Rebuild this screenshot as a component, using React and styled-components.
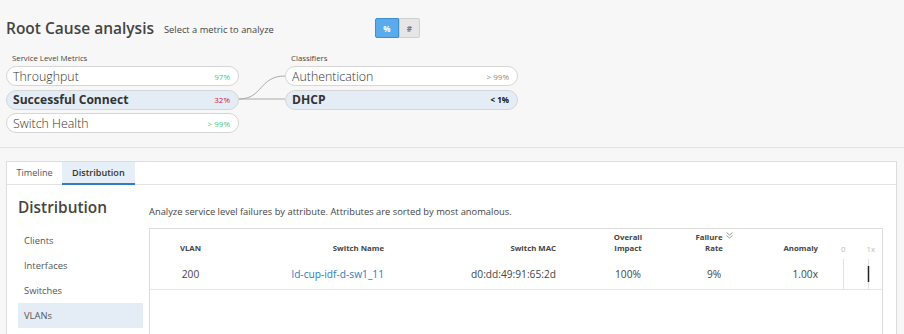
import React from 'react';
import styled, { createGlobalStyle } from 'styled-components';

const Global = createGlobalStyle`
  html, body { margin: 0; padding: 0; background: #f7f7f7; }
  body { font-family: "Open Sans", "Liberation Sans", sans-serif; color: #444; }
  * { box-sizing: border-box; }
`;

const Page = styled.div`
  width: 904px;
  height: 334px;
  overflow: hidden;
  background: #f7f7f7;
`;

const Header = styled.header`
  padding: 17px 6px 14px;
  border-bottom: 1px solid #e2e2e2;
`;

const TitleRow = styled.div`
  display: flex;
  align-items: center;
  height: 22px;
`;

const Title = styled.h1`
  margin: 0;
  font-size: 15.5px;
  line-height: 22px;
  font-weight: 600;
  color: #444;
`;

const Subtitle = styled.span`
  margin-left: 10px;
  margin-top: 3px;
  font-size: 9.3px;
  color: #444;
`;

const Toggle = styled.div`
  display: flex;
  margin-left: 101px;
`;

const ToggleButton = styled.div`
  width: ${p => p.$w}px;
  height: 20px;
  display: flex;
  align-items: center;
  justify-content: center;
  font-size: 8px;
  font-weight: 700;
  color: ${p => (p.$active ? '#fff' : '#777')};
  background: ${p => (p.$active ? '#5aabeb' : '#e6e6e6')};
  border: 1px solid ${p => (p.$active ? '#3d8fd2' : '#cfcfcf')};
  border-radius: ${p => (p.$active ? '2px 0 0 2px' : '0 2px 2px 0')};
`;

const Metrics = styled.div`
  display: flex;
  align-items: flex-start;
  margin-top: 13px;
`;

const Column = styled.div`
  width: 233px;
`;

const GroupLabel = styled.div`
  font-size: 7.8px;
  line-height: 12px;
  padding-left: 6px;
  margin-bottom: 2px;
  color: #444;
`;

const PillList = styled.div`
  display: flex;
  flex-direction: column;
  gap: 3.5px;
`;

const Pill = styled.div`
  height: 20px;
  display: flex;
  align-items: center;
  justify-content: space-between;
  padding: 0 8px 0 6px;
  border: 1px solid #d6d6d6;
  border-radius: 10px;
  background: ${p => (p.$selected ? '#e4edf6' : '#fff')};
`;

const PillName = styled.span`
  font-size: ${p => (p.$selected ? 12.1 : 12.4)}px;
  font-weight: ${p => (p.$selected ? 700 : 300)};
  color: #333;
`;

const PillValue = styled.span`
  font-size: 8px;
  font-weight: ${p => (p.$bold ? 700 : 400)};
  color: ${p => p.$color};
`;

const Connector = styled.svg`
  flex: 0 0 46px;
  margin-top: 14px;
`;

const Lower = styled.section`
  padding: 13px 7px 0 6px;
`;

const Panel = styled.div`
  background: #fff;
  border: 1px solid #dcdcdc;
  border-bottom: none;
  height: 200px;
`;

const TabBar = styled.div`
  display: flex;
  height: 23px;
  border-bottom: 1px solid #e3e3e3;
`;

const Tab = styled.div`
  display: flex;
  align-items: center;
  padding: 0 ${p => p.$pad}px;
  font-size: 9.1px;
  font-weight: ${p => (p.$active ? 600 : 400)};
  color: ${p => (p.$active ? '#333' : '#555')};
  background: ${p => (p.$active ? '#e6eef7' : 'transparent')};
  border-bottom: 2px solid ${p => (p.$active ? '#2f7dc4' : 'transparent')};
  margin-bottom: -1px;
`;

const Body = styled.div`
  display: grid;
  grid-template-columns: 125px 1fr;
  column-gap: 6px;
  padding: 0 14px 0 11px;
`;

const SideHeading = styled.h2`
  margin: 0;
  height: 43px;
  padding-top: 11px;
  font-size: 15.4px;
  line-height: 24px;
  font-weight: 600;
  color: #444;
`;

const Nav = styled.nav`
  display: flex;
  flex-direction: column;
`;

const NavItem = styled.div`
  height: 25px;
  display: flex;
  align-items: center;
  padding-left: 6px;
  font-size: 9.4px;
  color: #555;
  background: ${p => (p.$active ? '#e4edf6' : 'transparent')};
`;

const Description = styled.div`
  height: 43px;
  padding-top: 19px;
  font-size: 9.35px;
  line-height: 15px;
  color: #444;
`;

const Table = styled.div`
  border: 1px solid #dcdcdc;
  border-bottom: none;
  height: 120px;
`;

const Row = styled.div`
  display: grid;
  grid-template-columns: 81px 161px 180px 112px 60px 82px 1fr;
  height: ${p => (p.$head ? 30 : 31)}px;
  border-bottom: ${p => (p.$head ? 'none' : '1px solid #e6e6e6')};
`;

const HeadCell = styled.div`
  align-self: end;
  padding: 0 ${p => p.$pr || 0}px 5px 0;
  font-size: 7.8px;
  line-height: 11px;
  font-weight: 700;
  color: #444;
  text-align: ${p => p.$align || 'center'};
`;

const Cell = styled.div`
  display: flex;
  align-items: center;
  justify-content: ${p => (p.$align === 'right' ? 'flex-end' : 'center')};
  padding-right: ${p => p.$pr || 0}px;
  font-size: 10.2px;
  color: #444;
`;

const Link = styled.a`
  color: #2a7bc1;
  text-decoration: none;
`;

const Scale = styled.div`
  align-self: end;
  display: flex;
  gap: 21px;
  padding: 0 0 4px 15px;
  font-size: 7.8px;
  line-height: 11px;
  color: #bbb;
`;

const SortIcon = () => (
  <svg width="7" height="7" viewBox="0 0 7 7" style={{ marginLeft: 3, verticalAlign: 1 }}>
    <polyline points="0.5,0.5 3.5,3 6.5,0.5" fill="none" stroke="#888" strokeWidth="0.9" />
    <polyline points="0.5,3.5 3.5,6 6.5,3.5" fill="none" stroke="#888" strokeWidth="0.9" />
  </svg>
);

const leftPills = [
  { name: 'Throughput', value: '97%', color: '#4cc97a' },
  { name: 'Successful Connect', value: '32%', color: '#cc2244', selected: true },
  { name: 'Switch Health', value: '> 99%', color: '#4cc97a' },
];

const rightPills = [
  { name: 'Authentication', value: '> 99%', color: '#888' },
  { name: 'DHCP', value: '< 1%', color: '#111', selected: true, bold: true },
];

export default function App() {
  return (
    <Page>
      <Global />
      <Header>
        <TitleRow>
          <Title>Root Cause analysis</Title>
          <Subtitle>Select a metric to analyze</Subtitle>
          <Toggle>
            <ToggleButton $active $w={24}>%</ToggleButton>
            <ToggleButton $w={21}>#</ToggleButton>
          </Toggle>
        </TitleRow>
        <Metrics>
          <Column>
            <GroupLabel>Service Level Metrics</GroupLabel>
            <PillList>
              {leftPills.map(p => (
                <Pill key={p.name} $selected={p.selected}>
                  <PillName $selected={p.selected}>{p.name}</PillName>
                  <PillValue $color={p.color}>{p.value}</PillValue>
                </Pill>
              ))}
            </PillList>
          </Column>
          <Connector width="46" height="66" viewBox="0 0 46 66">
            <path d="M0 33 C 24 33, 20 10, 46 10" fill="none" stroke="#aaa" strokeWidth="1" />
            <path d="M0 33 L 46 33" fill="none" stroke="#aaa" strokeWidth="1" />
          </Connector>
          <Column>
            <GroupLabel>Classifiers</GroupLabel>
            <PillList>
              {rightPills.map(p => (
                <Pill key={p.name} $selected={p.selected}>
                  <PillName $selected={p.selected}>{p.name}</PillName>
                  <PillValue $color={p.color} $bold={p.bold}>{p.value}</PillValue>
                </Pill>
              ))}
            </PillList>
          </Column>
        </Metrics>
      </Header>
      <Lower>
        <Panel>
          <TabBar>
            <Tab $pad={9.5}>Timeline</Tab>
            <Tab $pad={10} $active>Distribution</Tab>
          </TabBar>
          <Body>
            <div>
              <SideHeading>Distribution</SideHeading>
              <Nav>
                <NavItem>Clients</NavItem>
                <NavItem>Interfaces</NavItem>
                <NavItem>Switches</NavItem>
                <NavItem $active>VLANs</NavItem>
              </Nav>
            </div>
            <div>
              <Description>
                Analyze service level failures by attribute. Attributes are sorted by most anomalous.
              </Description>
              <Table>
                <Row $head>
                  <HeadCell>VLAN</HeadCell>
                  <HeadCell $align="right" $pr={8}>Switch Name</HeadCell>
                  <HeadCell $align="right" $pr={16}>Switch MAC</HeadCell>
                  <HeadCell>Overall<br />Impact</HeadCell>
                  <HeadCell>Failure<SortIcon /><br />Rate</HeadCell>
                  <HeadCell $align="right" $pr={8}>Anomaly</HeadCell>
                  <Scale><span>0</span><span>1x</span></Scale>
                </Row>
                <Row>
                  <Cell>200</Cell>
                  <Cell $align="right" $pr={8}><Link href="#">ld-cup-idf-d-sw1_11</Link></Cell>
                  <Cell $align="right" $pr={16}>d0:dd:49:91:65:2d</Cell>
                  <Cell>100%</Cell>
                  <Cell>9%</Cell>
                  <Cell $align="right" $pr={8}>1.00x</Cell>
                  <svg width="56" height="30" viewBox="0 0 56 30">
                    <line x1="17.5" y1="0" x2="17.5" y2="30" stroke="#e2e2e2" strokeWidth="1" />
                    <line x1="42.5" y1="0" x2="42.5" y2="30" stroke="#e2e2e2" strokeWidth="1" />
                    <line x1="42.5" y1="7" x2="42.5" y2="23" stroke="#222" strokeWidth="1.5" />
                  </svg>
                </Row>
              </Table>
            </div>
          </Body>
        </Panel>
      </Lower>
    </Page>
  );
}
